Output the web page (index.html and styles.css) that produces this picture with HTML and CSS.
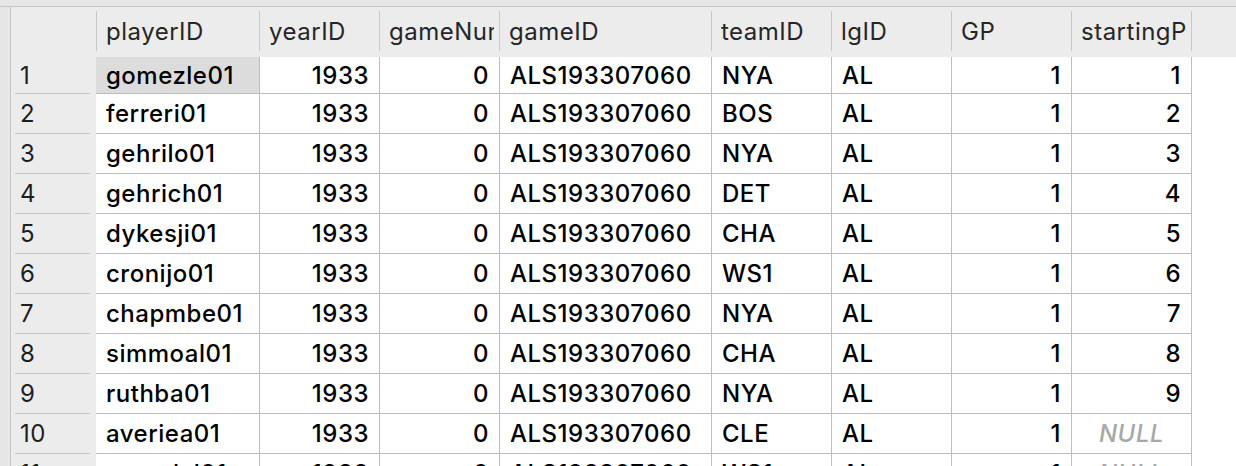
FILE: index.html
```html
<!DOCTYPE html>
<html>
<head>
<meta charset="utf-8">
<link rel="stylesheet" href="styles.css">
</head>
<body>
<div class="frame">
  <div class="topstrip"></div>
  <div class="main">
    <div class="leftstrip"></div>
    <div class="grid">
      <div class="hrow">
        <div class="hcell corner"></div>
        <div class="hcell"><span class="ht">playerID</span></div>
        <div class="hcell"><span class="ht">yearID</span></div>
        <div class="hcell"><span class="ht">gameNum</span></div>
        <div class="hcell"><span class="ht">gameID</span></div>
        <div class="hcell"><span class="ht">teamID</span></div>
        <div class="hcell"><span class="ht">lgID</span></div>
        <div class="hcell"><span class="ht">GP</span></div>
        <div class="hcell"><span class="ht">startingPos</span></div>
        <div class="hcell"></div>
      </div>
      <div class="row first">
        <div class="rn"><span class="rnin">1</span></div>
        <div class="c sel">gomezle01</div><div class="c r">1933</div><div class="c r">0</div><div class="c">ALS193307060</div><div class="c">NYA</div><div class="c">AL</div><div class="c r">1</div><div class="c r">1</div><div></div>
      </div>
      <div class="row">
        <div class="rn"><span class="rnin">2</span></div>
        <div class="c">ferreri01</div><div class="c r">1933</div><div class="c r">0</div><div class="c">ALS193307060</div><div class="c">BOS</div><div class="c">AL</div><div class="c r">1</div><div class="c r">2</div><div></div>
      </div>
      <div class="row">
        <div class="rn"><span class="rnin">3</span></div>
        <div class="c">gehrilo01</div><div class="c r">1933</div><div class="c r">0</div><div class="c">ALS193307060</div><div class="c">NYA</div><div class="c">AL</div><div class="c r">1</div><div class="c r">3</div><div></div>
      </div>
      <div class="row">
        <div class="rn"><span class="rnin">4</span></div>
        <div class="c">gehrich01</div><div class="c r">1933</div><div class="c r">0</div><div class="c">ALS193307060</div><div class="c">DET</div><div class="c">AL</div><div class="c r">1</div><div class="c r">4</div><div></div>
      </div>
      <div class="row">
        <div class="rn"><span class="rnin">5</span></div>
        <div class="c">dykesji01</div><div class="c r">1933</div><div class="c r">0</div><div class="c">ALS193307060</div><div class="c">CHA</div><div class="c">AL</div><div class="c r">1</div><div class="c r">5</div><div></div>
      </div>
      <div class="row">
        <div class="rn"><span class="rnin">6</span></div>
        <div class="c">cronijo01</div><div class="c r">1933</div><div class="c r">0</div><div class="c">ALS193307060</div><div class="c">WS1</div><div class="c">AL</div><div class="c r">1</div><div class="c r">6</div><div></div>
      </div>
      <div class="row">
        <div class="rn"><span class="rnin">7</span></div>
        <div class="c">chapmbe01</div><div class="c r">1933</div><div class="c r">0</div><div class="c">ALS193307060</div><div class="c">NYA</div><div class="c">AL</div><div class="c r">1</div><div class="c r">7</div><div></div>
      </div>
      <div class="row">
        <div class="rn"><span class="rnin">8</span></div>
        <div class="c">simmoal01</div><div class="c r">1933</div><div class="c r">0</div><div class="c">ALS193307060</div><div class="c">CHA</div><div class="c">AL</div><div class="c r">1</div><div class="c r">8</div><div></div>
      </div>
      <div class="row">
        <div class="rn"><span class="rnin">9</span></div>
        <div class="c">ruthba01</div><div class="c r">1933</div><div class="c r">0</div><div class="c">ALS193307060</div><div class="c">NYA</div><div class="c">AL</div><div class="c r">1</div><div class="c r">9</div><div></div>
      </div>
      <div class="row">
        <div class="rn"><span class="rnin">10</span></div>
        <div class="c">averiea01</div><div class="c r">1933</div><div class="c r">0</div><div class="c">ALS193307060</div><div class="c">CLE</div><div class="c">AL</div><div class="c r">1</div><div class="c null">NULL</div><div></div>
      </div>
      <div class="row">
        <div class="rn"><span class="rnin">11</span></div>
        <div class="c">crowdal01</div><div class="c r">1933</div><div class="c r">0</div><div class="c">ALS193307060</div><div class="c">WS1</div><div class="c">AL</div><div class="c r">1</div><div class="c null">NULL</div><div></div>
      </div>
    </div>
  </div>
</div>
</body>
</html>
```

FILE: styles.css
```css
html, body {
  margin: 0;
  padding: 0;
  background: #ffffff;
  overflow: hidden;
  height: 466px;
}
.frame {
  font-family: "Inter", "Liberation Sans", sans-serif;
  font-size: 24px;
  font-weight: 500;
  letter-spacing: 0.5px;
  color: #000;
}
.topstrip {
  height: 6px;
  background: #e6e6e6;
  border-bottom: 1px solid #c6c6c6;
}
.main {
  display: flex;
}
.leftstrip {
  width: 10px;
  flex: none;
  background: #e6e6e6;
  border-right: 1px solid #c6c6c6;
}
.grid {
  flex: 1;
  display: flex;
  flex-direction: column;
}
.hrow {
  display: grid;
  grid-template-columns: 85px 163px 120px 120px 212px 120px 120px 120px 120px 1fr;
  height: 50px;
  background: #ececec;
  align-items: start;
}
.hcell {
  margin-top: 4px;
  height: 40px;
  border-left: 1px solid #c8c8c8;
  padding: 0 5px 0 9px;
  display: flex;
  align-items: center;
  overflow: hidden;
  color: #262626;
  font-weight: 400;
}
.ht {
  white-space: nowrap;
  overflow: hidden;
}
.hcell.corner {
  border-left: none;
}
.row {
  display: grid;
  grid-template-columns: 85px 164px 120px 120px 212px 120px 120px 120px 120px 1fr;
  height: 40px;
  flex: none;
}
.row.first {
  height: 37px;
}
.rn {
  background: #ececec;
  padding: 0 6px 0 4px;
  display: flex;
}
.rnin {
  flex: 1;
  display: flex;
  align-items: center;
  padding-left: 5px;
  border-bottom: 1px solid #c4c4c4;
  color: #1e1e1e;
  font-weight: 400;
}
.c {
  border-right: 1px solid #bdbdbd;
  border-bottom: 1px solid #bdbdbd;
  padding: 0 10px;
  display: flex;
  align-items: center;
  white-space: nowrap;
  overflow: hidden;
}
.c.r {
  justify-content: flex-end;
}
.c.sel {
  background: #dcdcdc;
}
.c.null {
  justify-content: center;
  color: #a8a8a8;
  font-style: italic;
}
```
